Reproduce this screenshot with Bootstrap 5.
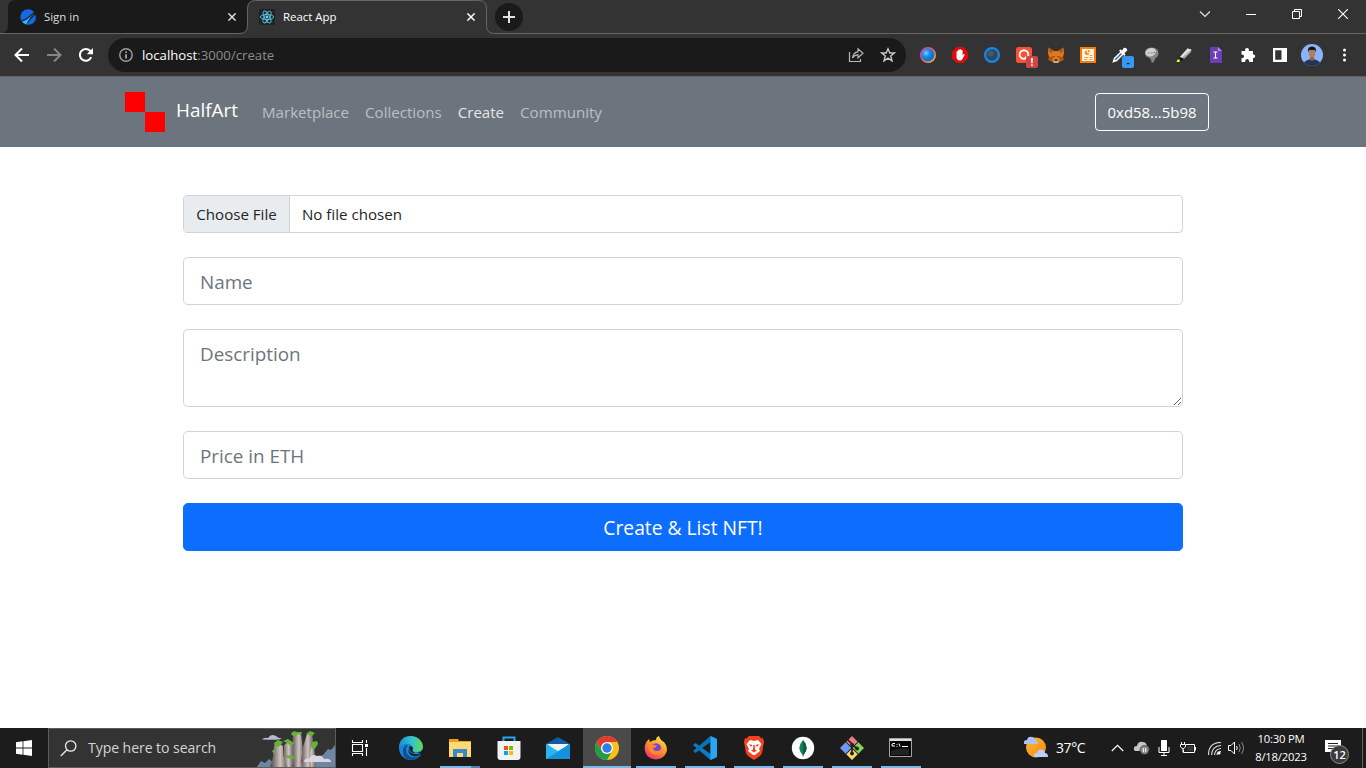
<!DOCTYPE html>
<html lang="en">
<head>
<meta charset="utf-8">
<meta name="viewport" content="width=device-width, initial-scale=1">
<title>React App</title>
<link href="https://cdn.jsdelivr.net/npm/bootstrap@5.3.0/dist/css/bootstrap.min.css" rel="stylesheet">
<style>
  body{font-family:"Open Sans","Noto Sans",sans-serif;font-size:15px;line-height:24px;height:768px;overflow:hidden;background:#fff}
  svg{display:block;flex:none}
  .browser-top{height:76px;background:#333;box-shadow:inset 0 -1px #3a3434}
  .tabstrip{height:38px}
  .tab-lines{top:0;left:0}
  .tab-item{height:34px;font-size:11.4px;color:#dedede;width:239px;z-index:1}
  .tab-item .tab-name{width:184px;line-height:18px}
  .tab-icon{margin:0 8px 0 12px}
  .win-btn{width:46px;height:28px}
  .new-tab{width:28px;height:28px;background:#1a1a1a;margin:3px 0 0 9px;z-index:1}
  .toolbar-row{height:34px}
  .nav-slot{width:32px}
  .omnibox{width:798px;height:34px;background:#1a1a1a;font-size:13.2px;color:#8c8c8c;line-height:20px;margin-left:6px}
  .omnibox b{font-weight:400;color:#fff}
  .ext{width:32px;height:34px}
  .site-nav{height:71px;background:#6c757d;border-top:1px solid #665f5c}
  .brand-name{font-size:18.9px;line-height:30px;color:#fff;width:63px;margin:0 0 4px 11px}
  .site-nav .nav-link{font-size:15.1px;padding:0 8px;color:rgba(255,255,255,.55)}
  .site-nav .nav-link.active{color:rgba(255,255,255,.84)}
  .wallet{width:114px;height:38px;border-radius:4px;font-size:14.9px;line-height:24px;margin-right:32px;white-space:nowrap}
  .mint-form{width:1000px;margin-top:48px}
  .mint-form .form-control{border-color:#ced4da;border-radius:4.8px}
  .mint-form .form-control:not([type=file]){font-size:18.85px;line-height:30px;height:48px;padding:9px 16px 7px}
  .mint-form textarea.form-control:not([type=file]){height:78px;min-height:78px}
  .mint-form .form-control::placeholder{color:#6c757d;opacity:1}
  .mint-form .form-control[type=file]{font-size:15.1px;line-height:24px;height:38px;border-radius:4px;color:#212529}
  .mint-form .form-control::file-selector-button{background:#e9ecef;color:#212529;width:106px;padding:6px 0}
  .mint-btn{height:48px;font-size:19.25px;line-height:30px;background:#0d6efd;border-radius:4.8px;padding:8px 0 6px}
  .taskbar{height:40px;background:#1c1c1c;color:#fff}
  .start-btn{width:48px}
  .search-box{width:288px;height:40px;background:#333;border:1px solid #5c5c5c;color:#d4d4d4;font-size:14.1px;letter-spacing:-.08px}
  .task-btn{width:48px;height:40px;margin-right:1px}
  .task-btn.open::after{content:"";position:absolute;left:4px;right:4px;bottom:0;height:2px;background:#76b9ed}
  .task-btn.current{background:#4a4a4a}
  .task-btn.current::after{left:0;right:0}
  .task-btn.stacked::after{background:linear-gradient(90deg,#76b9ed 31px,#5583a8 31px)}
  .clock{font-size:11.3px;line-height:18px;width:60px;white-space:nowrap;letter-spacing:-.2px;margin-right:14px}
  .temp{font-size:14px;width:55px;letter-spacing:-.4px}
  .ext-badge{right:2px;bottom:4px;width:12px;height:12px;border-radius:2px;font-size:10px;line-height:12px;text-align:center;color:#fff;font-weight:700}
  .note-box{width:37px;height:40px}
  .note-count{left:5px;top:17px;width:19px;height:19px;border-radius:50%;background:#3b3b3b;border:1px solid #8c8c8c;font-size:11px;font-weight:600;line-height:17px;text-align:center}
  .desk-edge{width:4px;height:40px;border-left:1px solid #666}
</style>
</head>
<body class="d-flex flex-column">

<header class="browser-top">
  <div class="tabstrip d-flex position-relative">
    <svg class="tab-lines position-absolute" width="1366" height="38" fill="none">
      <path d="M0 33.5Q8 33.5 8 25V8Q8 0 16 0H256Q248 0 247.500 8V25Q247.500 33.500 240 33.500Z" fill="#1a1a1a"/>
      <path d="M0 33.500H239.500Q247.500 33.500 247.500 25.500V8.500Q247.500.5 255.500.5H478.500Q486.500.5 486.500 8.500V25.500Q486.500 33.500 494.500 33.500H1366" stroke="#646565"/>
    </svg>
    <div class="tab-item d-flex align-items-center ms-2">
      <svg class="tab-icon" width="16" height="16" viewBox="0 0 16 16"><circle cx="8" cy="8" r="7.700" fill="#1766e8"/><path d="M1 12Q7 9.500 10.500 6Q13 3.500 15 2.500L15.800 5Q10 11 6 15.500Q3 14.500 1 12Z" fill="#1a1a1a"/><path d="M2 12.500Q7 11 10.500 7.500Q13 5 14.500 4.500Q10 8 8 12L6.200 15.400Q3.500 14.800 2 12.500Z" fill="#2ebcf5"/><path d="M15.600 6.500Q10.500 11 8.500 15.600Q14.500 15.200 15.600 10Z" fill="#1766e8"/></svg>
      <span class="tab-name">Sign in</span>
      <svg width="8" height="8" viewBox="0 0 8 8" stroke="#ddd" stroke-width="1.500"><path d="M.4.4L7.600 7.600M7.600.4L.4 7.600"/></svg>
    </div>
    <div class="tab-item d-flex align-items-center text-white">
      <svg class="tab-icon" width="16" height="16" viewBox="0 0 16 16"><rect width="16" height="16" rx="1.500" fill="#20232a"/><g fill="none" stroke="#58c4dc" stroke-width=".9"><ellipse cx="8" cy="8" rx="6.600" ry="2.600"/><ellipse cx="8" cy="8" rx="6.600" ry="2.600" transform="rotate(60 8 8)"/><ellipse cx="8" cy="8" rx="6.600" ry="2.600" transform="rotate(120 8 8)"/></g><circle cx="8" cy="8" r="1.400" fill="#61dafb"/></svg>
      <span class="tab-name">React App</span>
      <svg width="8" height="8" viewBox="0 0 8 8" stroke="#fff" stroke-width="1.500"><path d="M.4.4L7.600 7.600M7.600.4L.4 7.600"/></svg>
    </div>
    <div class="new-tab rounded-circle d-flex align-items-center justify-content-center"><svg width="12" height="12" stroke="#e2e2e2" stroke-width="2"><path d="M0 6H12M6 0V12"/></svg></div>
    <div class="ms-auto d-flex">
      <div class="win-btn d-flex align-items-center justify-content-center"><svg width="12" height="8" fill="none" stroke="#e0e0e0" stroke-width="1.200"><path d="M1 1.500L6 6.500L11 1.500"/></svg></div>
      <div class="win-btn d-flex align-items-center justify-content-center"><svg width="10" height="10" stroke="#fff"><path d="M0 5.500H10"/></svg></div>
      <div class="win-btn d-flex align-items-center justify-content-center"><svg width="10" height="10" fill="none" stroke="#fff"><path d="M.5 2.500H7.500V9.500H.5ZM2.500 2.500V.5H9.500V7.500H7.500"/></svg></div>
      <div class="win-btn d-flex align-items-center justify-content-center"><svg width="10" height="10" stroke="#fff" stroke-width="1.100"><path d="M0 0L10 10M10 0L0 10"/></svg></div>
    </div>
  </div>
  <div class="toolbar-row d-flex align-items-center">
    <div class="nav-slot d-flex justify-content-center" style="margin-left:6px"><svg width="16" height="16" fill="none" stroke="#fff" stroke-width="2"><path d="M15 8H2M8 1.500L1.500 8L8 14.500"/></svg></div>
    <div class="nav-slot d-flex justify-content-center"><svg width="16" height="16" fill="none" stroke="#858585" stroke-width="2"><path d="M1 8H14M8 1.500L14.500 8L8 14.500"/></svg></div>
    <div class="nav-slot d-flex justify-content-center"><svg width="16" height="16"><path d="M13.200 10.200A5.900 5.900 0 1 1 12.100 3.800L13 4.800" fill="none" stroke="#fff" stroke-width="2.100"/><path d="M15 1V7.200H8.800Z" fill="#fff"/></svg></div>
    <div class="omnibox rounded-pill d-flex align-items-center">
      <svg style="margin:0 9px 0 11px" width="14" height="14"><circle cx="7" cy="7" r="6.200" fill="none" stroke="#9aa0a6" stroke-width="1.400"/><path d="M6.200 6.200H7.800V10.500H6.200ZM6.200 3.500H7.800V5H6.200Z" fill="#b5b9be"/></svg>
      <span><b>localhost</b>:3000/create</span>
      <svg class="ms-auto" style="margin-right:16px" width="16" height="16" fill="none" stroke="#b8b8b8" stroke-width="1.200"><path d="M1.500 5V14.500H12.500V12M4.500 11Q5.500 5 10 4.800V1.800L15 6.300L10 10.800V7.800Q6.500 7.500 4.500 11Z"/></svg>
      <svg style="margin-right:10px" width="16" height="16" fill="none" stroke="#c8c8c8" stroke-width="1.400"><path d="M8 1.800L9.800 6H14.300L10.700 9L12 13.800L8 11.200L4 13.800L5.300 9L1.700 6H6.200Z"/></svg>
    </div>
    <div class="d-flex" style="margin-left:6px">
      <div class="ext d-flex align-items-center justify-content-center"><svg width="16" height="16"><defs><linearGradient id="ring" x1="0" y1="0" x2="1" y2="1"><stop stop-color="#b93bd6"/><stop offset=".5" stop-color="#f05a70"/><stop offset="1" stop-color="#ffc83a"/></linearGradient><radialGradient id="orb" cx=".35" cy=".35"><stop stop-color="#7cd6ff"/><stop offset=".5" stop-color="#2293e8"/><stop offset="1" stop-color="#1273d0"/></radialGradient></defs><circle cx="8" cy="8" r="8" fill="url(#ring)"/><circle cx="8" cy="8" r="6.500" fill="url(#orb)"/></svg></div>
      <div class="ext d-flex align-items-center justify-content-center"><svg width="16" height="16"><path d="M4.700 0H11.300L16 4.700V11.300L11.300 16H4.700L0 11.300V4.700Z" fill="#e20b0b"/><path d="M4.500 8V4.500Q5.200 3.800 5.900 4.500V3Q6.700 2.300 7.500 3V2.400Q8.300 1.700 9.100 2.400V3.200Q10 2.500 10.600 3.400V8.500L11.800 7Q13 6.800 12.700 7.800L10.500 12Q9.500 13.500 7.800 13.500Q5 13.500 4.500 10.500Z" fill="#fff"/></svg></div>
      <div class="ext d-flex align-items-center justify-content-center"><svg width="16" height="16"><circle cx="8" cy="8" r="8" fill="#1685ea"/><circle cx="8" cy="8" r="5.800" fill="#31475b"/><circle cx="6.800" cy="6.500" r="3" fill="#435a6e"/></svg></div>
      <div class="ext d-flex align-items-center justify-content-center position-relative"><svg width="16" height="16"><rect width="16" height="16" rx="2.500" fill="#ff4f35"/><circle cx="8" cy="7.500" r="4.300" fill="none" stroke="#fff" stroke-width="1.900"/><path d="M9 10L13 13.500" stroke="#fff" stroke-width="2"/></svg><span class="ext-badge position-absolute" style="background:#d04444">!</span></div>
      <div class="ext d-flex align-items-center justify-content-center"><svg width="16" height="16"><path d="M.5.5L6 4H10L15.500.5L16 6L15 10L15.500 13L12 14.500L10 16H6L4 14.500L.5 13L1 10L0 6Z" fill="#e2761b"/><path d="M1 10L5 9.500L4 14L.5 13ZM15 10L11 9.500L12 14L15.500 13ZM.5.5L5.500 4L2 6Z M15.500.5L10.500 4L14 6Z" fill="#a5561b"/><path d="M4.500 9L6.500 9.500L6.500 10.500ZM11.500 9L9.500 9.500L9.500 10.500Z" fill="#222"/><path d="M6 13H10V15.500H6Z" fill="#d8c4b3"/><path d="M6.500 12.500H9.500V14H6.500Z" fill="#222"/></svg></div>
      <div class="ext d-flex align-items-center justify-content-center"><svg width="16" height="16"><path d="M0 0H16V16H0Z" fill="#fb7a0a"/><path d="M2 2H14V14H2Z" fill="#fff4e2"/><path d="M7 3.500A2.300 2.300 0 1 0 9.300 6H7ZM8 3V5H10A2 2 0 0 0 8 3Z" fill="#fb8a18"/><path d="M4 10.500H8M4 12.500H7M9.500 8.500H12.500M9.500 10.500H12.500M9.500 12.500H12.500" stroke="#fb9a38"/></svg></div>
      <div class="ext d-flex align-items-center justify-content-center position-relative"><svg width="16" height="16"><path d="M1.500 14.500L2.500 11.500L9 5L11 7L4.500 13.500Z" stroke="#fff" stroke-width="1.500" fill="#2862cc"/><path d="M7 3.500L8.500 2.500L10 3.500L12 .8Q15 .5 15.300 3.500L12.500 6L13.500 7.500L12.500 9Z" fill="#fff"/></svg><span class="ext-badge position-absolute" style="background:#3898ef;color:#123">-</span></div>
      <div class="ext d-flex align-items-center justify-content-center"><svg width="16" height="16"><path d="M1 4.500Q2.500.5 8 .5Q14.500 1 14.500 6Q14.500 10 11.500 11L9.500 15.500H7.500Q7.500 12 5.500 11Q0 9.500 1 4.500Z" fill="#858585"/><path d="M1.500 5Q3 1 8 1Q12 1.500 12 5Q10 9.500 5.500 9.500Q1 8.500 1.500 5Z" fill="#d0d0d0"/><path d="M4 6H5.500M7 6H8.500M9.500 5.500H11" stroke="#777"/></svg></div>
      <div class="ext d-flex align-items-center justify-content-center"><svg width="16" height="16"><path d="M4 10L11.500 1.500L15.500 2.500L15 5L8 12Z" fill="#a8a8a8"/><path d="M11.500 1.500L15.500 2.500L6 10.500L4 10Z" fill="#e2e2e2"/><path d="M3.500 10L8 12L5.500 14H3Z" fill="#171717"/><path d="M1.500 12.500H4L3.500 15H.5Z" fill="#f4f80b"/></svg></div>
      <div class="ext d-flex align-items-center justify-content-center"><svg width="16" height="16"><path d="M2 0H10L14 4V16H2Z" fill="#6e3cb4"/><path d="M10 0V4H14Z" fill="#b491df"/><path d="M5.500 5H9.500M7.500 5V11M5.500 11H9.500" stroke="#fff" stroke-width="1.100"/></svg></div>
      <div class="ext d-flex align-items-center justify-content-center"><svg width="16" height="16"><path d="M1.500 4H5.200Q4.600 1 7 1Q9.400 1 8.800 4H13V7.500Q15.200 7 15.200 9.200Q15.200 11.300 13 10.900V15H9.200Q9.200 12 7.200 12Q5.200 12 5.200 15H1.500V11.200Q4.200 11 4.200 9.200Q4.200 7.500 1.500 7.500Z" fill="#fff"/></svg></div>
      <div class="ext d-flex align-items-center justify-content-center"><svg width="14" height="14"><path d="M0 0H14V14H0ZM2.200 2.200V11.800H8.500V2.200Z" fill="#fff" fill-rule="evenodd"/></svg></div>
      <div class="ext d-flex align-items-center justify-content-center"><svg width="22" height="22"><clipPath id="face"><circle cx="11" cy="11" r="11"/></clipPath><g clip-path="url(#face)"><path d="M0 0H22V22H0Z" fill="#8bb3fa"/><path d="M2 22Q2 17 8 15.500H14Q20 17 20 22Z" fill="#263450"/><path d="M9 11H13V15L11 17.500L9 15Z" fill="#8f6047"/><ellipse cx="11" cy="9" rx="3.200" ry="4.500" fill="#b37e5f"/><path d="M7.300 8.500Q6 2.500 11 2.500Q16 2.500 14.700 8.500L13.800 6H8.200Z" fill="#151315"/></g></svg></div>
      <div class="ext d-flex align-items-center justify-content-center"><svg width="4" height="14" fill="#fff"><circle cx="2.500" cy="2" r="1.500"/><circle cx="2.500" cy="7" r="1.500"/><circle cx="2.500" cy="12" r="1.500"/></svg></div>
    </div>
  </div>
</header>

<nav class="navbar navbar-expand-lg navbar-dark site-nav p-0">
  <div class="container flex-nowrap">
    <a class="navbar-brand d-flex align-items-center p-0 m-0" href="#">
      <svg width="40" height="40" fill="#f00"><path d="M0 0H20V20H0ZM20 20H40V40H20Z"/></svg>
      <span class="brand-name">HalfArt</span>
    </a>
    <ul class="navbar-nav flex-row me-auto" style="margin-left:15px">
      <li class="nav-item"><a class="nav-link" href="#">Marketplace</a></li>
      <li class="nav-item"><a class="nav-link" href="#">Collections</a></li>
      <li class="nav-item"><a class="nav-link active" href="#">Create</a></li>
      <li class="nav-item"><a class="nav-link" href="#">Community</a></li>
    </ul>
    <button class="btn btn-outline-light wallet px-0 text-white border-white">0xd58...5b98</button>
  </div>
</nav>

<main class="flex-grow-1">
  <form class="mint-form mx-auto d-flex flex-column gap-4">
    <input class="form-control" type="file">
    <input class="form-control" type="text" placeholder="Name">
    <textarea class="form-control" placeholder="Description"></textarea>
    <input class="form-control" type="text" placeholder="Price in ETH">
    <button class="btn btn-primary mint-btn" type="button">Create &amp; List NFT!</button>
  </form>
</main>

<footer class="taskbar d-flex align-items-center">
  <div class="start-btn d-flex justify-content-center"><svg width="16" height="16" fill="#fff"><path d="M0 2.200L6.600 1.300V7.500H0ZM7.400 1.200L16 0V7.500H7.400ZM0 8.400H6.600V14.700L0 13.800ZM7.400 8.400H16V16L7.400 14.800Z"/></svg></div>
  <div class="search-box d-flex align-items-center">
    <svg style="margin:0 11px" width="17" height="17" fill="none" stroke="#eee" stroke-width="1.300"><circle cx="10.700" cy="6" r="5.200"/><path d="M7 9.800L.8 16"/></svg>
    <span>Type here to search</span>
    <svg class="ms-auto" width="79" height="38" viewBox="0 0 79 38">
      <defs><linearGradient id="rock"><stop stop-color="#4b474c"/><stop offset=".3" stop-color="#8d8382"/><stop offset=".6" stop-color="#d0c4bb"/><stop offset="1" stop-color="#6b626c"/></linearGradient></defs>
      <path d="M1 38L5 32L9 34L13 30L18 34L24 38ZM56 38L62 27L67 26L72 20L75 21L79 16V38Z" fill="#6d86a3"/>
      <path d="M48 38L49 18L53 14L58 18L60 38Z" fill="url(#rock)"/>
      <path d="M35 38L37 7L40 3L45 5L46 12L48 38Z" fill="url(#rock)"/>
      <path d="M44 38L47 18L51 5L56 4L57 12L54 24L55 38Z" fill="url(#rock)"/>
      <path d="M26 38L28 16L32 13L37 15L37 38Z" fill="url(#rock)"/>
      <path d="M14 38L17 28L18 17L22 14L27 17L27 26L31 38Z" fill="url(#rock)"/>
      <path d="M36 38L40 25L44 29L47 38Z" fill="url(#rock)"/>
      <path d="M35 5Q37 1 41 3L46 3L45 6L42 5L40 7L37 7ZM50 5L54 2L59 4L56 7L53 6ZM18 14L22 11L27 13L24 17L19 18ZM27 12L32 10L38 14L35 17L31 14ZM56 13L61 12L62 15L58 21L56 19ZM30 26L37 27L39 30L31 29ZM16 22L19 20L18 25Z" fill="#62b434"/>
      <path d="M6 10.500Q8 8 12 9Q15 4 20 7Q22 9 26 9.500Q24 11.500 6 10.500Z" fill="#b4bad0"/>
      <path d="M48 33Q48 29 53 29.500Q56 24 61 27Q66 26 68 30Q75 29 75 33Z" fill="#d9d6e2"/>
    </svg>
  </div>
  <div class="start-btn d-flex justify-content-center"><svg width="18" height="18" fill="none" stroke="#fff" stroke-width="1.100"><path d="M1.500 5.500H11.500V12.500H1.500ZM1.500 1V3.500H11.500V1M1.500 17V14.500H11.500V17M15.500 1V4M15.500 9V17"/><path d="M14 5H17V8H14Z" fill="#fff" stroke="none"/></svg></div>
  <div class="d-flex" style="margin-left:3px">
    <div class="task-btn d-flex align-items-center justify-content-center"><svg width="24" height="24"><defs><linearGradient id="edge" x2="1"><stop stop-color="#198fd4"/><stop offset=".5" stop-color="#30bfd3"/><stop offset="1" stop-color="#66db4c"/></linearGradient></defs><circle cx="12" cy="12" r="12" fill="#1687d2"/><path d="M0 11Q1 0 12 0Q23 1 24 11Q23 16 17 16Q13 16 14 13Q15 11 12 9Q7 5 0 11Z" fill="url(#edge)"/><path d="M9 9Q5 14 9 19Q14 24 21 19Q17 24 12 24Q3 23 4 14Q5 9 9 9Z" fill="#104d99"/><path d="M10 12Q9 17 15 18Q19 19 22 17Q19 21 14 20Q8 18 10 12Z" fill="#1c1c1c"/><path d="M10 11Q12 9 14 12Q12 16 16 17Q11 18 10 11Z" fill="#1c1c1c"/><path d="M17 16.500Q22 17 24 13L24 20L21 19Q23 17 17 16.500Z" fill="#1c1c1c"/></svg></div>
    <div class="task-btn open stacked d-flex align-items-center justify-content-center position-relative"><svg width="22" height="20"><path d="M0 1H9L10 3H22V19H0Z" fill="#e5a21c"/><path d="M0 4H22V19H0Z" fill="#ffda70"/><path d="M4 19V11H18V19H14V15H8V19Z" fill="#388bd0"/></svg></div>
    <div class="task-btn d-flex align-items-center justify-content-center"><svg width="24" height="24"><path d="M6.500 6V1.500H17.500V6" fill="none" stroke="#24a5ef" stroke-width="2"/><path d="M.5 5H23.500V21Q23.500 24 20.500 24H3.500Q.5 24 .5 21Z" fill="#f2f2f2"/><path d="M7 10H11V14H7Z" fill="#f25022"/><path d="M12 10H16V14H12Z" fill="#7fba00"/><path d="M7 15H11V19H7Z" fill="#00a4ef"/><path d="M12 15H16V19H12Z" fill="#ffb900"/></svg></div>
    <div class="task-btn d-flex align-items-center justify-content-center"><svg width="24" height="24"><path d="M0 8L12 1L24 8V14H0Z" fill="#0d5da7"/><path d="M1 8H23L12 17Z" fill="#f2f2f2"/><path d="M0 8L12 15L24 8V23H0Z" fill="#2bb5ef"/><path d="M0 23L24 8V23Z" fill="#1592dd"/></svg></div>
    <div class="task-btn open current d-flex align-items-center justify-content-center position-relative"><svg width="24" height="24"><circle cx="12" cy="12" r="12" fill="#fbc116"/><path d="M1.600 6A12 12 0 0 1 22.400 6H12L7 15Z" fill="#e33b2e"/><path d="M1.600 6A12 12 0 0 0 12 24L17.200 15L12 17.500L7 15Z" fill="#249b48"/><circle cx="12" cy="12" r="6" fill="#fff"/><circle cx="12" cy="12" r="4.700" fill="#2f7de9"/></svg></div>
    <div class="task-btn open d-flex align-items-center justify-content-center position-relative"><svg width="24" height="24"><defs><linearGradient id="fox" x1=".8" y1="0" x2=".2" y2="1"><stop stop-color="#fff04a"/><stop offset=".45" stop-color="#ff9725"/><stop offset="1" stop-color="#f52672"/></linearGradient></defs><path d="M3 5L5 3L6 6Q9 4 12 4Q12 1 15 0Q16 4 20 6Q24 11 22.500 16Q20 23 12 23.500Q3 23 1 15Q0 9 3 5Z" fill="url(#fox)"/><circle cx="12" cy="12.500" r="5.200" fill="#7542e5"/><path d="M4 10Q7 7 10 9L13 9.500Q12 12 9 12Q9 15 13 15Q17 15 17 11Q19 16 15 18Q8 20 5 14Z" fill="#ff8a2a"/></svg></div>
    <div class="task-btn open d-flex align-items-center justify-content-center position-relative"><svg width="24" height="24"><path d="M17.500 0L24 3V21L17.500 24L0 9L2.500 7L17.500 18Z" fill="#1079c4"/><path d="M17.500 6V0L0 15L2.500 17Z" fill="#0875b9"/><path d="M17.500 0L24 3V21L17.500 24Z" fill="#29a7f2"/></svg></div>
    <div class="task-btn open d-flex align-items-center justify-content-center position-relative"><svg width="24" height="24"><path d="M7 0H17L19.500 2.500L21 2L22 6L20 17Q19 20 12 24Q5 20 4 17L2 6L3 2L4.500 2.500Z" fill="#f4421e"/><path d="M8 4L12 5L16 4L19.500 8L17 13L18 15L13 19H11L6 15L7 13L4.500 8Z" fill="#fff"/><path d="M7 8L10.500 9L9 11ZM17 8L13.500 9L15 11ZM11.300 9H12.700L13 13.500L15 14.500L12 16.500L9 14.500L11 13.500Z" fill="#f4421e"/></svg></div>
    <div class="task-btn open d-flex align-items-center justify-content-center position-relative"><svg width="24" height="24"><circle cx="12" cy="12" r="11.200" fill="#fff"/><path d="M12 4Q19 12 12.500 19L12 21L11.500 19Q5 12 12 4Z" fill="#138256"/><path d="M12 4Q19 12 12.500 19L12 21Z" fill="#0c5d45"/></svg></div>
    <div class="task-btn open d-flex align-items-center justify-content-center position-relative"><svg width="24" height="24"><g transform="rotate(45 12 12)"><path d="M3.500 3.500H11.500V11.500H3.500Z" fill="#ef7d80"/><path d="M12.500 3.500H20.500V11.500H12.500Z" fill="#84d654"/><path d="M3.500 12.500H11.500V20.500H3.500Z" fill="#6b9bf4"/><path d="M12.500 12.500H20.500V20.500H12.500Z" fill="#ffdc66"/></g><path d="M7.500 3.500L16.500 12.500M12 8V17" stroke="#222" stroke-width="1.700"/><circle cx="12" cy="17.500" r="2" fill="#222"/><circle cx="17" cy="12.500" r="2" fill="#222"/><circle cx="12" cy="8.500" r="1.800" fill="#222"/></svg></div>
    <div class="task-btn open d-flex align-items-center justify-content-center position-relative"><svg width="24" height="20" style="margin-right:1px"><path d="M.5.500H22.500V18.500H.5Z" fill="#050505" stroke="#a5a5a5"/><path d="M1 1H22V3H1Z" fill="#dce0e5"/><path d="M6 5.500H4Q3 5.500 3 7V8H6M8 6V6.800M8 8V8.800M10 5.500L11 8.500M13 8.500H19" stroke="#fff" fill="none"/><path d="M2 13Q12 9 20 11V17H2Z" fill="#222"/></svg></div>
  </div>
  <div class="d-flex align-items-center ms-auto">
    <svg style="margin-right:8px" width="24" height="24"><defs><linearGradient id="sun" y2="1"><stop stop-color="#ffb52b"/><stop offset="1" stop-color="#f48a1b"/></linearGradient></defs><circle cx="12" cy="11.500" r="10" fill="url(#sun)"/><path d="M0 8Q-1 4 3 4Q4 0 8 1Q11 1 11 4Q14 4 13.500 8Z" fill="#a9c4f5"/><path d="M10 21Q9 17 13 17Q14 12 19 14Q21 15 21 17Q24 17 24 21Z" fill="#b9cff8"/></svg>
    <span class="temp">37°C</span>
    <svg style="margin-right:9px" width="13" height="8" fill="none" stroke="#fff" stroke-width="1.200"><path d="M.8 7L6.500 1.300L12.200 7"/></svg>
    <svg style="margin-right:8px" width="17" height="14"><path d="M1 9Q0 5 4 5Q5 0 10 1Q13 1 14 5Q17 6 16 10H2Z" fill="#c6c6c6"/><circle cx="11.500" cy="9" r="4.500" fill="#8a8a8a" stroke="#1c1c1c" stroke-width=".6"/><path d="M10.300 7V11M12.700 7V11" stroke="#fff"/></svg>
    <svg style="margin-right:10px" width="12" height="16"><rect x="3" width="6" height="11" rx=".6" fill="#fff"/><path d="M1 7V12.500H11V7M6 13V15.500M3 15.500H9" fill="none" stroke="#fff"/></svg>
    <svg style="margin-right:11px" width="17" height="12" fill="none" stroke="#fff"><path d="M6 2.500H14.500V10.500H3.500V8M15.500 5V8.500M1.500 0V2M4.500 0V2M.5 2.500H5.500V5L3 7L.5 5ZM3 7V10.500"/><path d="M7 4H13V9H7Z" fill="#fff" stroke="none" opacity=".12"/></svg>
    <svg style="margin-right:6px" width="14" height="13" fill="none" stroke="#ddd" stroke-width="1.100"><path d="M.5 13Q.5.5 13 .5M3.500 13Q4 4 13 3.500M6.500 13Q7 7 13 6.500"/><circle cx="11" cy="11" r="1.600" fill="#fff" stroke="none"/><path d="M9 13Q9 9.500 13 9.500"/></svg>
    <svg style="margin-right:6px" width="17" height="14" fill="none" stroke="#fff"><path d="M.5 4.500H3L6.500 1V13L3 9.500H.5ZM8.500 5Q10 7 8.500 9"/><path d="M11 3Q13.500 7 11 11M13.500 1Q17.500 7 13.500 13" stroke="#888"/></svg>
    <div class="clock text-center">10:30 PM<br>8/18/2023</div>
    <div class="note-box position-relative"><svg style="margin-top:12px" width="16" height="16"><path d="M0 0H16V12H11V15.500L7.500 12H0Z" fill="#fff"/><path d="M3 3.500H13M3 6H13M3 8.500H10" stroke="#222"/></svg><span class="note-count position-absolute">12</span></div>
    <div class="desk-edge"></div>
  </div>
</footer>
<script src="https://cdn.jsdelivr.net/npm/bootstrap@5.3.0/dist/js/bootstrap.bundle.min.js"></script>
</body>
</html>
